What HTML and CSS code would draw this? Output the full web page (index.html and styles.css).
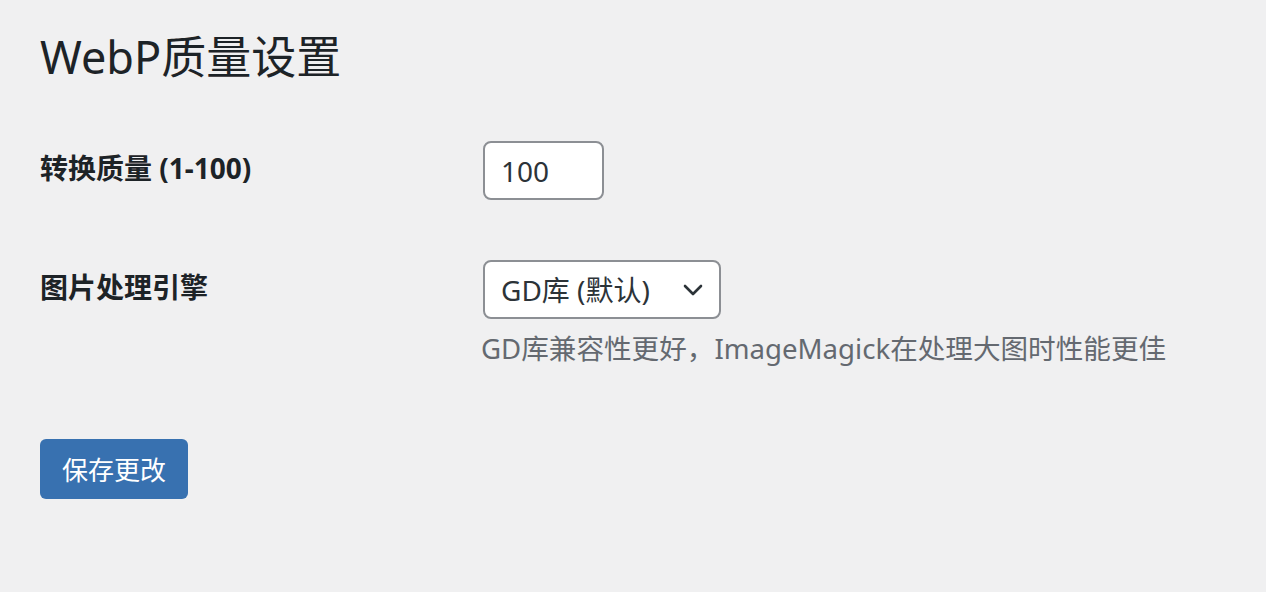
FILE: index.html
```html
<!DOCTYPE html>
<html lang="zh-CN">
<head>
<meta charset="utf-8">
<title>WebP质量设置</title>
<link rel="stylesheet" href="styles.css">
</head>
<body>
<div class="wrap">
  <h1 class="title">WebP质量设置</h1>
  <form class="form-table">
    <div class="row">
      <label class="th" for="q">转换质量 (1-100)</label>
      <div class="td">
        <input id="q" class="num" type="text" value="100">
      </div>
    </div>
    <div class="row">
      <label class="th" for="eng">图片处理引擎</label>
      <div class="td">
        <div class="select-wrap">
          <select id="eng" class="sel">
            <option>GD库 (默认)</option>
            <option>ImageMagick</option>
          </select>
          <svg class="chev" width="22" height="14" viewBox="0 0 22 14"><path d="M3 3 L11 11 L19 3" fill="none" stroke="#2c3338" stroke-width="2.6" stroke-linecap="round" stroke-linejoin="round"/></svg>
        </div>
        <p class="desc">GD库兼容性更好，ImageMagick在处理大图时性能更佳</p>
      </div>
    </div>
    <div class="submit">
      <button type="button" class="btn">保存更改</button>
    </div>
  </form>
</div>
</body>
</html>
```
FILE: styles.css
```css
html, body {
  margin: 0;
  background: #f0f0f1;
}
body {
  font-family: "Noto Sans", "Noto Sans CJK SC", sans-serif;
  color: #1d2327;
}
.wrap {
  padding: 27px 40px;
}
.title {
  margin: 0;
  font-size: 45px;
  line-height: 60px;
  font-weight: 400;
  color: #1d2327;
}
.form-table {
  margin-top: 24px;
}
.row {
  display: grid;
  grid-template-columns: 443px 1fr;
}
.th {
  padding-top: 40px;
  font-size: 28px;
  line-height: 34px;
  font-weight: 700;
  color: #1d2327;
}
.td {
  padding: 30px 0;
}
.num {
  box-sizing: border-box;
  width: 121px;
  height: 59px;
  margin: 0;
  padding: 0 16px;
  border: 2px solid #8c8f94;
  border-radius: 8px;
  background: #fff;
  font-family: "Noto Sans", "Noto Sans CJK SC", sans-serif;
  font-size: 28px;
  line-height: 55px;
  color: #2c3338;
  outline: none;
}
.select-wrap {
  position: relative;
  width: 238px;
  height: 59px;
}
.sel {
  box-sizing: border-box;
  -webkit-appearance: none;
  appearance: none;
  width: 238px;
  height: 59px;
  margin: 0;
  padding: 0 50px 0 16px;
  border: 2px solid #8c8f94;
  border-radius: 8px;
  background: #fff;
  font-family: "Noto Sans", "Noto Sans CJK SC", sans-serif;
  font-size: 28px;
  color: #2c3338;
  outline: none;
}
.chev {
  position: absolute;
  right: 17px;
  top: 23px;
  pointer-events: none;
}
.desc {
  margin: 9px 0 0 -2px;
  font-size: 27.6px;
  line-height: 40px;
  color: #646970;
}
.submit {
  padding-top: 41px;
}
.btn {
  box-sizing: border-box;
  width: 148px;
  height: 60px;
  margin: 0;
  padding: 0;
  border: 0;
  border-radius: 6px;
  background: #3871b0;
  color: #fff;
  font-family: "Noto Sans", "Noto Sans CJK SC", sans-serif;
  font-size: 26px;
}
```
